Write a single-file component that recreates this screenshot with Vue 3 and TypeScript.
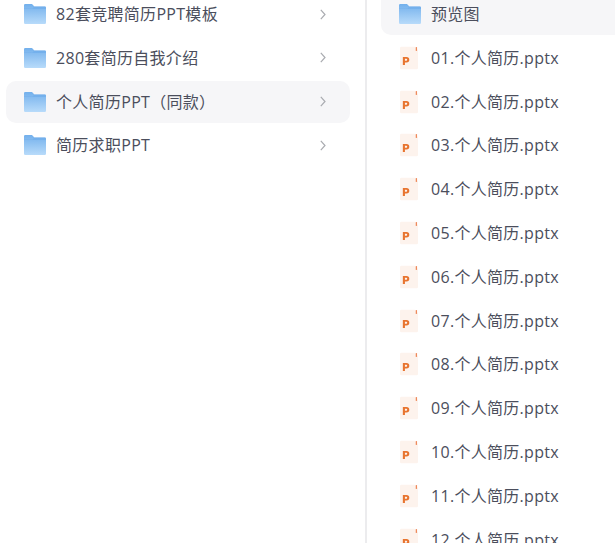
<template>
  <div class="page">
    <ul class="list left">
      <li v-for="(name, i) in folders" :key="name" class="row" :class="{ active: i === 2 }">
        <svg class="folder" viewBox="0 0 22 20" aria-hidden="true">
          <use href="#folder-shape" />
        </svg>
        <span class="name">{{ name }}</span>
        <svg class="chevron" viewBox="0 0 6 11" aria-hidden="true">
          <path d="M.8.8 5 5.5.8 10.2" fill="none" stroke="#a9abb0" stroke-width="1.2" />
        </svg>
      </li>
    </ul>

    <div class="divider"></div>

    <ul class="list right">
      <li class="row active preview">
        <svg class="folder" viewBox="0 0 22 20" aria-hidden="true">
          <use href="#folder-shape" />
        </svg>
        <span class="name">预览图</span>
      </li>
      <li v-for="file in files" :key="file" class="row">
        <svg class="ppt" viewBox="0 0 19 24" aria-hidden="true">
          <path d="M1.5 0H15.5L19 3.5V22.5a1.5 1.5 0 0 1-1.5 1.5H1.5A1.5 1.5 0 0 1 0 22.5V1.5A1.5 1.5 0 0 1 1.5 0Z" fill="#fdf3ed" />
          <rect x="16.6" y="0.5" width="1.4" height="4" fill="#ee8a5c" />
          <path d="M3 19.5V11h3.9a2.9 2.9 0 0 1 0 5.8H5.2v2.7Zm2.2-4.6h1.4a1 1 0 0 0 0-2H5.2Z" fill="#e8742f" />
        </svg>
        <span class="name">{{ file }}</span>
      </li>
    </ul>

    <svg class="defs" aria-hidden="true">
      <defs>
        <linearGradient id="folder-fill" x1="0" y1="0" x2="0" y2="1">
          <stop offset="0" stop-color="#73b0ec" />
          <stop offset="1" stop-color="#b8dbfa" />
        </linearGradient>
        <symbol id="folder-shape" viewBox="0 0 22 20">
          <path d="M0 1.2A1.2 1.2 0 0 1 1.2 0H8l2.4 2.4H20.8A1.2 1.2 0 0 1 22 3.6V18.8A1.2 1.2 0 0 1 20.8 20H1.2A1.2 1.2 0 0 1 0 18.8Z" fill="url(#folder-fill)" />
          <path d="M0 4.4H8.6L10.4 2.4H20.8A1.2 1.2 0 0 1 22 3.6V5H0Z" fill="#6aa9e9" opacity=".55" />
        </symbol>
      </defs>
    </svg>
  </div>
</template>

<script setup lang="ts">
const folders: string[] = [
  "82套竞聘简历PPT模板",
  "280套简历自我介绍",
  "个人简历PPT（同款）",
  "简历求职PPT",
];

const files: string[] = Array.from(
  { length: 12 },
  (_, i) => `${String(i + 1).padStart(2, "0")}.个人简历.pptx`
);
</script>

<style scoped>
.page {
  display: flex;
  width: 615px;
  height: 543px;
  overflow: hidden;
  background: #fff;
  color: #4b4e5c;
  font-family: "Open Sans", "Noto Sans CJK SC", sans-serif;
  font-size: 16px;
  letter-spacing: 0.3px;
}

.list {
  display: flex;
  flex-direction: column;
  flex-shrink: 0;
  gap: 1.8px;
  margin: -7px 0 0;
  padding: 0;
  list-style: none;
}

.left {
  width: 344px;
  margin-left: 6px;
}

.right {
  flex: 1;
  margin-left: 14px;
}

.row {
  display: flex;
  flex-shrink: 0;
  align-items: center;
  height: 42px;
  padding: 0 24px 0 18px;
  border-radius: 10px;
}

.active {
  background: #f6f6f8;
}

.preview {
  border-radius: 0 0 0 10px;
}

.folder {
  flex-shrink: 0;
  width: 22px;
  height: 20px;
  margin-right: 10px;
}

.ppt {
  flex-shrink: 0;
  width: 18px;
  height: 24px;
  margin: 0 13px 0 1px;
}

.name {
  flex: 1;
  padding-bottom: 2px;
  white-space: nowrap;
}

.chevron {
  flex-shrink: 0;
  width: 6px;
  height: 11px;
}

.divider {
  flex-shrink: 0;
  width: 2px;
  margin-left: 15px;
  background: #ececee;
}

.defs {
  position: absolute;
  width: 0;
  height: 0;
}
</style>
